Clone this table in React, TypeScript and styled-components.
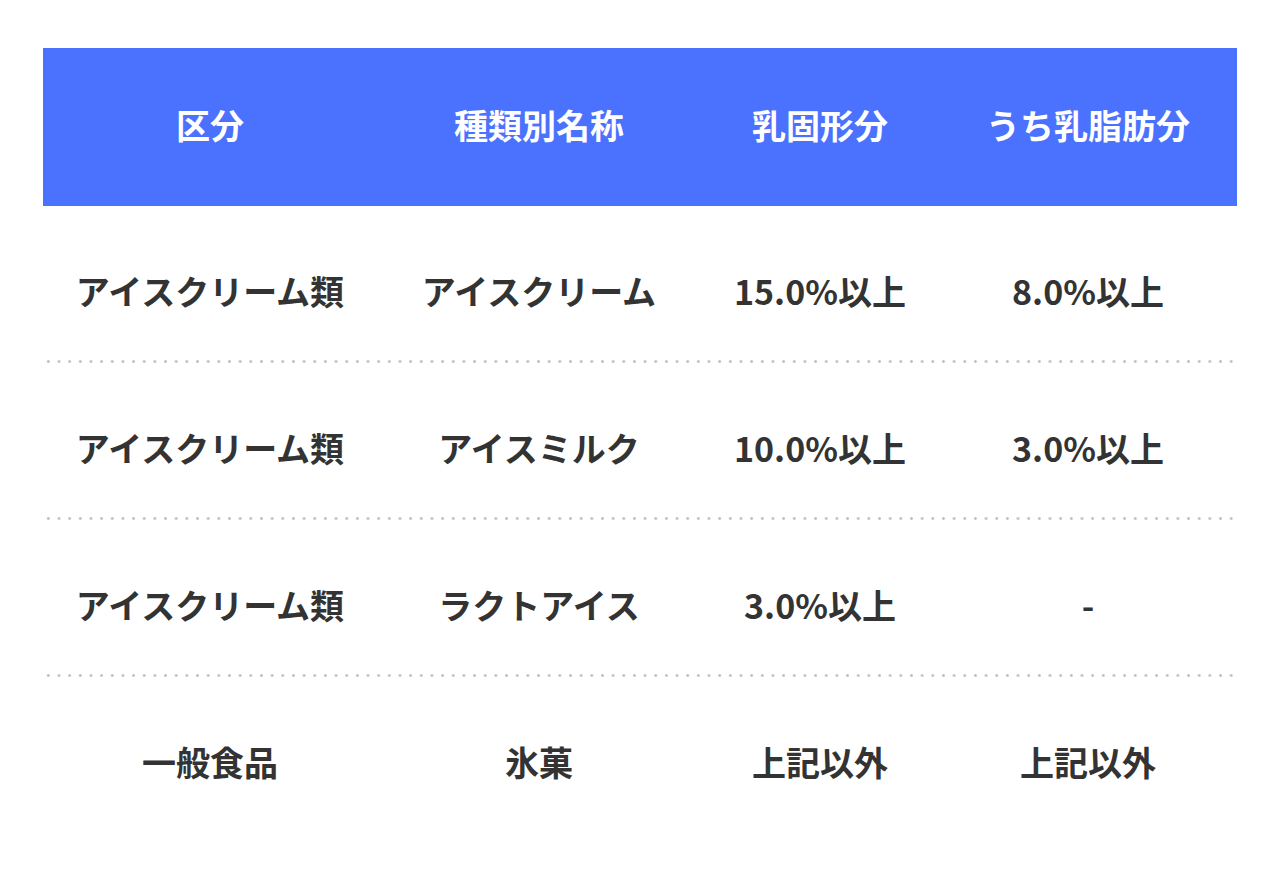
import React from 'react';
import styled, {createGlobalStyle} from 'styled-components';

const GlobalStyle = createGlobalStyle`
  html, body {
    margin: 0;
    padding: 0;
    background: #fff;
  }
  body {
    font-family: "Noto Sans CJK JP", "Noto Sans", sans-serif;
    color: #333;
  }
`;

const Page = styled.div`
  padding: 48px 43px 0 43px;
`;

const Table = styled.div`
  width: 1194px;
`;

const Row = styled.div<{ $head?: boolean; $last?: boolean }>`
  display: grid;
  grid-template-columns: 334px 324px 238px 1fr;
  align-items: center;
  height: ${p => p.$head ? 158 : 157}px;
  padding: ${p => p.$head ? '0 0 6px' : '12px 0 0'};
  box-sizing: border-box;
  background: ${p => p.$head
    ? '#4a72ff'
    : p.$last
      ? 'none'
      : 'radial-gradient(circle, #c2c2c2 1.1px, transparent 1.7px) left bottom / 10.66px 3px repeat-x'};
  color: ${p => p.$head ? '#fff' : '#333'};
`;

const Cell = styled.div`
  text-align: center;
  font-size: 34px;
  font-weight: 700;
  line-height: 1.5;
`;

const head = ['区分', '種類別名称', '乳固形分', 'うち乳脂肪分'];

const rows = [
  ['アイスクリーム類', 'アイスクリーム', '15.0%以上', '8.0%以上'],
  ['アイスクリーム類', 'アイスミルク', '10.0%以上', '3.0%以上'],
  ['アイスクリーム類', 'ラクトアイス', '3.0%以上', '-'],
  ['一般食品', '氷菓', '上記以外', '上記以外'],
];

export default function App() {
  return (
    <Page>
      <GlobalStyle/>
      <Table>
        <Row $head>
          {head.map(h => <Cell key={h}>{h}</Cell>)}
        </Row>
        {rows.map((r, i) =>
          <Row key={i} $last={i === rows.length - 1}>
            {r.map((c, j) => <Cell key={j}>{c}</Cell>)}
          </Row>
        )}
      </Table>
    </Page>
  );
}
